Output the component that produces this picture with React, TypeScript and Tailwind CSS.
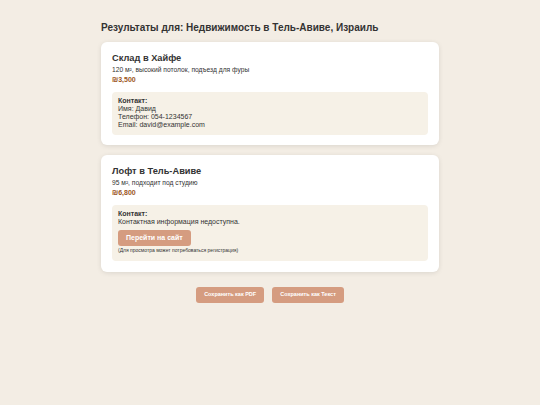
import React from 'react';

interface Listing {
  title: string;
  desc: string;
  price: string;
  contact?: { name: string; phone: string; email: string };
}

const listings: Listing[] = [
  {
    title: 'Склад в Хайфе',
    desc: '120 м², высокий потолок, подъезд для фуры',
    price: '₪3,500',
    contact: { name: 'Давид', phone: '054-1234567', email: 'david@example.com' },
  },
  {
    title: 'Лофт в Тель-Авиве',
    desc: '95 м², подходит под студию',
    price: '₪6,800',
  },
];

export default function App() {
  return (
    <div
      className="min-h-[405px] w-full bg-[#f3ede4] text-[#333] pt-[22px]"
      style={{ fontFamily: '"Liberation Sans", Arial, sans-serif' }}
    >
      <div className="w-[338px] mx-auto">
        <h1 className="text-[10px] font-bold leading-[12px] text-[#333] mb-[8px]">
          Результаты для: Недвижимость в Тель-Авиве, Израиль
        </h1>

        <div className="flex flex-col gap-[10px]">
          {listings.map((item) => (
            <div
              key={item.title}
              className="bg-white rounded-[6px] shadow-[0_1px_5px_rgba(0,0,0,0.1)] px-[11px] pt-[10px] pb-[10.5px]"
            >
              <h2 className="text-[9.25px] font-bold leading-[12px] text-[#333]">{item.title}</h2>
              <p className="text-[6.7px] leading-[8px] text-[#333] mt-[2px]">{item.desc}</p>
              <p className="text-[7px] leading-[8px] font-bold text-[#9b5523] mt-[2px] mb-[7.5px]">{item.price}</p>

              <div className="bg-[#f6f1e7] rounded-[4px] px-[6px] pt-[5.5px] pb-[5.5px] text-[7px] leading-[8px] text-[#333]">
                <div className="font-bold">Контакт:</div>
                {item.contact ? (
                  <>
                    <div>Имя: {item.contact.name}</div>
                    <div>Телефон: {item.contact.phone}</div>
                    <div>Email: {item.contact.email}</div>
                  </>
                ) : (
                  <>
                    <div>Контактная информация недоступна.</div>
                    <button className="mt-[4px] bg-[#d59c80] text-white font-bold text-[7px] leading-[16px] h-[16px] px-[8px] rounded-[3px]">
                      Перейти на сайт
                    </button>
                    <div className="text-[5px] leading-[6px] mt-[1px] mb-[2.5px]">(Для просмотра может потребоваться регистрация)</div>
                  </>
                )}
              </div>
            </div>
          ))}
        </div>

        <div className="flex justify-center gap-[8px] mt-[15px]">
          <button className="bg-[#d59c80] text-white font-bold text-[5.5px] h-[16px] px-[8px] rounded-[3px]">
            Сохранить как PDF
          </button>
          <button className="bg-[#d59c80] text-white font-bold text-[5.5px] h-[16px] px-[8px] rounded-[3px]">
            Сохранить как Текст
          </button>
        </div>
      </div>
    </div>
  );
}
